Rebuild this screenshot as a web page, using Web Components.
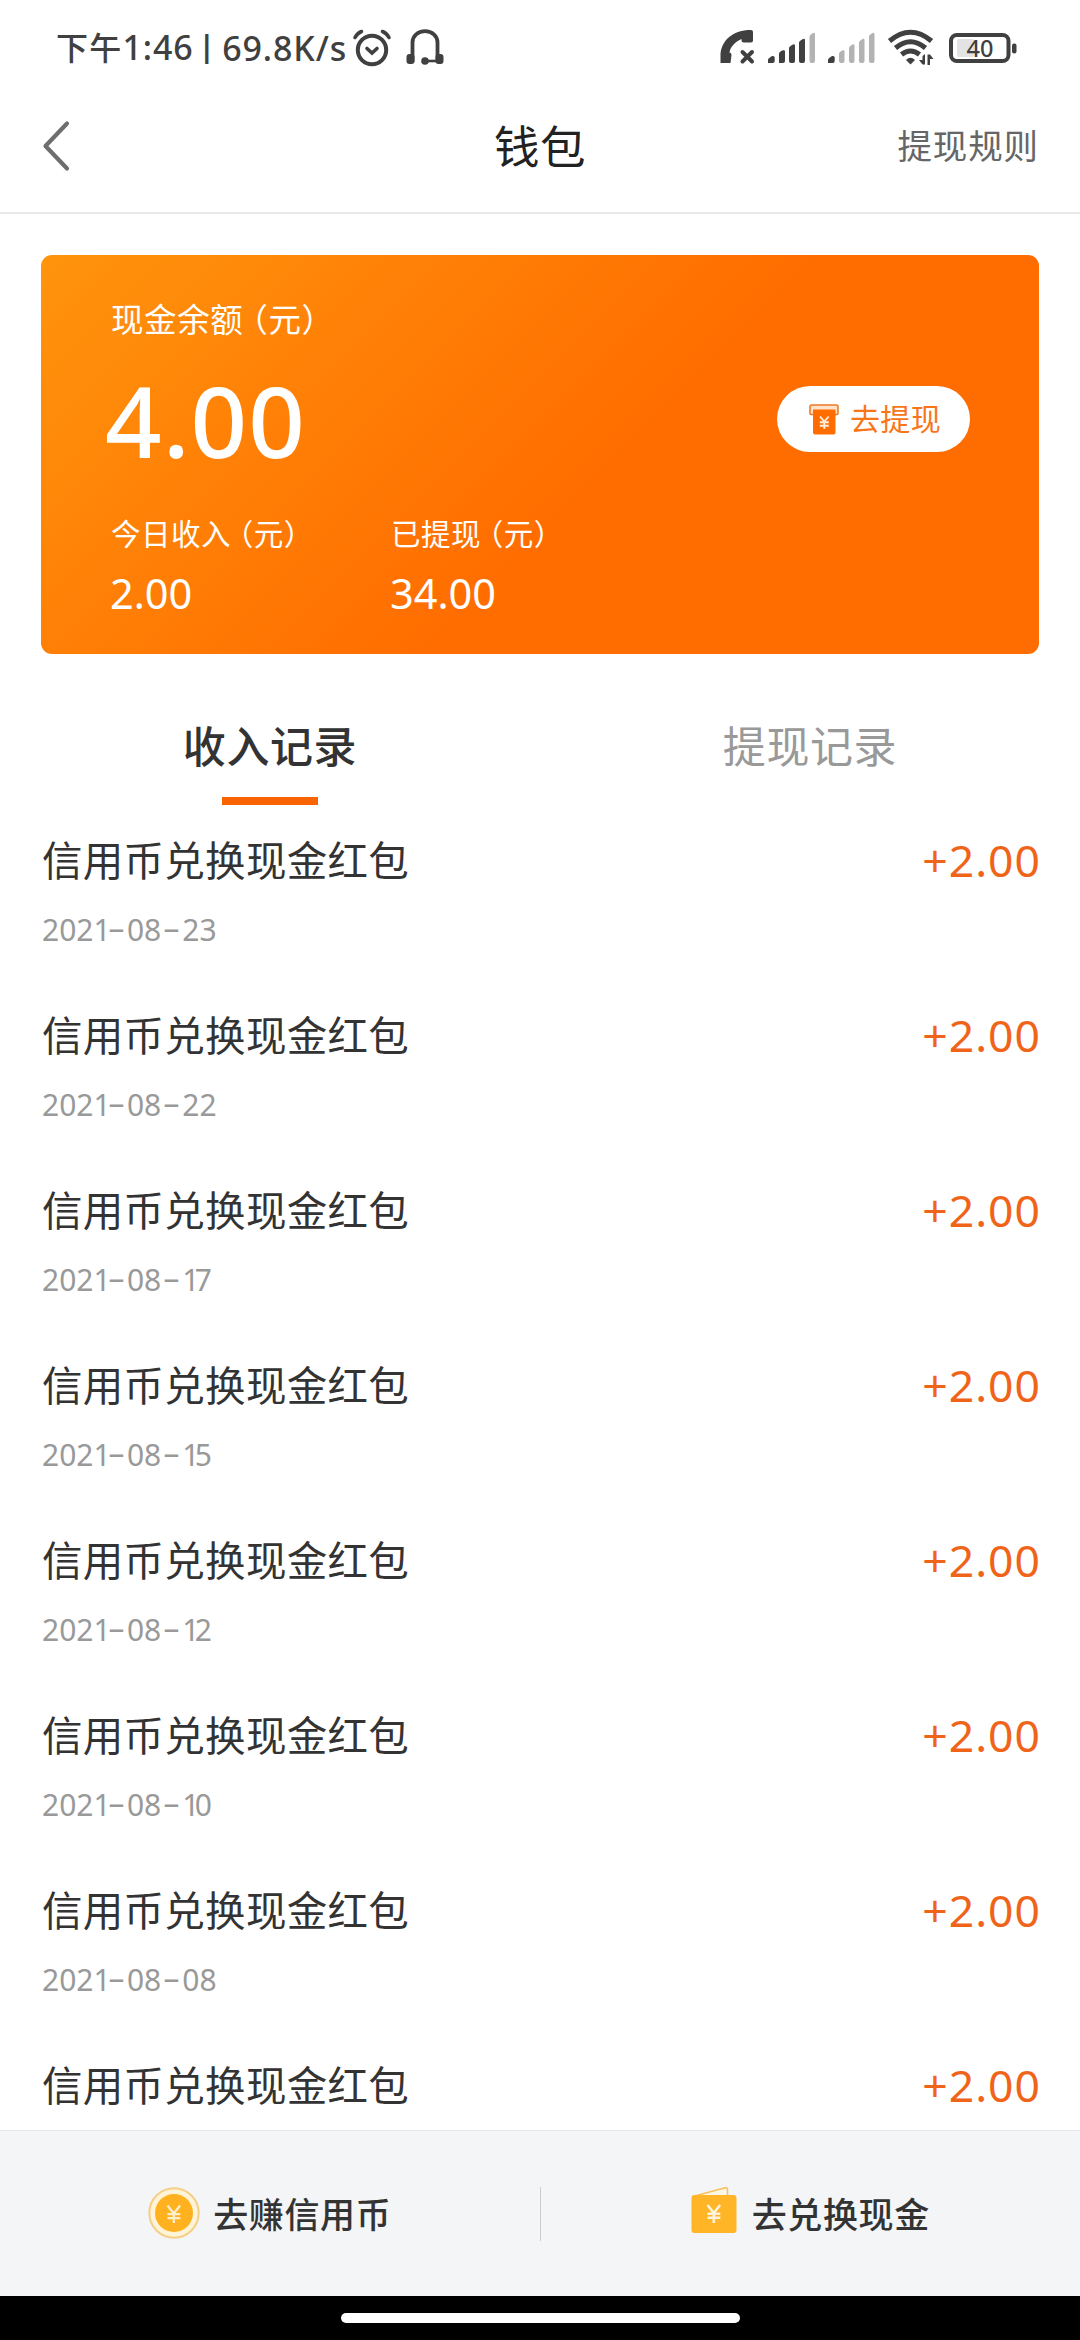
<!DOCTYPE html>
<html lang="zh-CN">
<head>
<meta charset="utf-8">
<title>钱包</title>
<style>
html,body{margin:0;padding:0;background:#fff}
body{font-family:"Noto Sans","Noto Sans CJK SC",sans-serif;color:#333}
</style>
</head>
<body>
<wallet-app></wallet-app>
<script>
const define = (name, html) => {
  const tpl = document.createElement('template');
  tpl.innerHTML = html;
  customElements.define(name, class extends HTMLElement {
    constructor() {
      super();
      this.attachShadow({ mode: 'open' }).append(tpl.content.cloneNode(true));
    }
  });
};

define('status-bar', `
<style>
:host{display:flex;justify-content:space-between;height:95px;box-sizing:border-box;padding:0 62px 0 56px;color:#404040}
.side{display:flex;align-items:center}
.clock{display:flex;align-items:center;font-size:34px;line-height:60px;font-weight:500;letter-spacing:.9px;white-space:pre}
.cjk{font-size:32px;letter-spacing:1.2px}
.bar{font-size:30px;line-height:54px;font-weight:700;margin:0 7px 4px 5px;letter-spacing:0}
svg{display:block;flex:none}
</style>
<div class="side"><div class="clock"><span><span class="cjk">下午</span>1:46</span><span class="bar">|</span><span>69.8K/s</span></div>
<svg width="40" height="38" viewBox="0 0 40 38" style="margin-left:5px" fill="none" stroke="#404040" stroke-linecap="round"><circle cx="20" cy="21" r="14.200" stroke-width="4"/><path d="M3 8.500Q5.500 4 9.500 2.500M37 8.500Q34.500 4 30.500 2.500" stroke-width="3.600"/><path d="M15 19.500l5 4.500 5-4.500" stroke-width="3.600"/></svg>
<svg width="38" height="38" viewBox="0 0 38 38" style="margin-left:14px" fill="none" stroke="#404040"><path d="M6.500 33V13.500C6.500 7 12 2.200 19 2.200S31.500 7 31.500 13.500V33" stroke-width="3.800"/><path d="M18 32H31" stroke-width="2.600"/><circle cx="19" cy="32" r="3.800" fill="#404040" stroke="none"/><rect x=".5" y="25" width="8" height="10" rx="3" fill="#404040" stroke="none"/><rect x="29.500" y="25" width="8" height="10" rx="3" fill="#404040" stroke="none"/></svg>
</div>
<div class="side">
<svg width="298" height="38" viewBox="0 0 298 38">
<g fill="#404040">
<path d="M.5 34V27C.5 11 14 .8 31 1a2 2 0 0 1 2 2v8.500a2 2 0 0 1-2 2h-7a2.500 2.500 0 0 1-2.500-2.500v-1C15 13 10.500 17.500 9.500 23.500a2.500 2.500 0 0 1 2 2.500l-1 8Z"/>
<path d="M22.500 23l9.500 9.500M32 23l-9.500 9.500" stroke="#404040" stroke-width="4" stroke-linecap="round"/>
<path d="M48 34v-3.500q0-1 4-3.500 2.700-.5 2.700 1.500v3.500a2 2 0 0 1-2 2ZM59 24.500q0-1.500 4-3.200 2-.6 2 1.200v9.500a2 2 0 0 1-2 2h-4ZM69 19q0-1.500 4-3.500 2-.6 2 1.200v15.300a2 2 0 0 1-2 2h-2a2 2 0 0 1-2-2ZM79 13.500q0-1.500 4-3.500 2-.6 2 1.200v20.800a2 2 0 0 1-2 2h-2a2 2 0 0 1-2-2Z"/>
<path d="M108 34v-3.500q0-1 4-3.500 2.700-.5 2.700 1.500v3.500a2 2 0 0 1-2 2Z"/></g>
<path fill="#b3b3b3" d="M89.500 7.500q0-1.500 3.500-3.500 2-.6 2 1.200v26.800a2 2 0 0 1-2 2h-1.500a2 2 0 0 1-2-2ZM119 24.500q0-1.500 3.500-3.200 2-.6 2 1.200v9.500a2 2 0 0 1-2 2H121a2 2 0 0 1-2-2ZM129 19q0-1.500 3.500-3.500 2-.6 2 1.200v15.300a2 2 0 0 1-2 2H131a2 2 0 0 1-2-2ZM139 13.500q0-1.500 3.500-3.500 2-.6 2 1.200v20.800a2 2 0 0 1-2 2H141a2 2 0 0 1-2-2ZM149 7.500q0-1.500 3.500-3.500 2-.6 2 1.200v26.800a2 2 0 0 1-2 2H151a2 2 0 0 1-2-2Z"/>
<g fill="none" stroke="#404040" stroke-width="5"><path d="M169.500 12Q190.500-5.500 211.500 12"/><path d="M175.500 19Q190.500 6.500 205.500 19"/><path d="M181.500 25.500Q190.500 18.500 199.500 25.500"/></g>
<path d="M186 31q4.500-4.500 9 0l-4.500 4.500Z" fill="#404040"/>
<path d="M205 25v10.500h-2.500L199 31h3.500V27ZM207.500 36V25.500h2.500L213.500 30H210v6Z" fill="#404040"/>
<rect x="237" y="10" width="17" height="18" rx="2" fill="#e3e3e3"/>
<rect x="231" y="6" width="57.500" height="26" rx="6" fill="none" stroke="#404040" stroke-width="4"/>
<rect x="292" y="14.500" width="4.500" height="10" rx="2" fill="#404040"/>
<text x="246.500" y="27.500" font-family="Noto Sans, sans-serif" font-size="23.500" font-weight="500" fill="#404040">40</text>
</svg></div>`);

define('nav-bar', `
<style>
:host{display:grid;grid-template-columns:1fr auto 1fr;align-items:center;height:119px;box-sizing:border-box;padding:0 41px 15px 41px;border-bottom:2px solid #e8e9e9}
.title{font-size:45.500px;line-height:60px;color:#222;letter-spacing:.5px}
.rule{justify-self:end;font-size:34.500px;line-height:60px;color:#666;letter-spacing:.9px}
svg{display:block}
</style>
<svg width="30" height="52" viewBox="0 0 30 52"><path d="M26 3.500L4.500 26 26 48.500" fill="none" stroke="#6e6e6e" stroke-width="4.200" stroke-linecap="round" stroke-linejoin="round"/></svg>
<span class="title"><slot name="title"></slot></span>
<span class="rule"><slot name="action"></slot></span>`);

// Caption followed by the currency unit in half-width forms of the CJK brackets.
define('unit-label', `
<style>
:host{display:block;white-space:nowrap}
.unit{margin-left:.25em;font-feature-settings:"halt"}
</style><slot></slot><span class="unit">（元）</span>`);

define('balance-card', `
<style>
:host{display:flex;justify-content:space-between;margin:41px 41px 0;height:399px;box-sizing:border-box;padding:42px 69px 0 70px;border-radius:11px;color:#fff;background:linear-gradient(135deg,#ff940d 0%,#ff6d00 56%)}
.cap{font-size:32.500px;line-height:46px;letter-spacing:.6px}
.sum{font-size:99px;font-weight:500;line-height:110px;letter-spacing:1px;margin:22px 0 0 -6px}
.stats{display:grid;grid-template-columns:280px auto;margin-top:36px}
.small{font-size:29.500px;line-height:46px;letter-spacing:.5px}
.num{font-size:41.500px;line-height:50px;margin:11px 0 0 -1px}
.btn{display:flex;align-items:center;justify-content:center;gap:11px;width:193px;height:66px;box-sizing:border-box;padding-left:3px;margin-top:89px;border-radius:33px;background:#fff;color:#f8761a;font-size:30px;line-height:60px;letter-spacing:.3px}
svg{display:block}
</style>
<div>
<unit-label class="cap">现金余额</unit-label>
<div class="sum">4.00</div>
<div class="stats">
<div><unit-label class="small">今日收入</unit-label><div class="num">2.00</div></div>
<div><unit-label class="small">已提现</unit-label><div class="num">34.00</div></div>
</div>
</div>
<div class="btn"><svg width="30" height="31" viewBox="0 0 30 31"><path d="M1 9.500V2.500A1.500 1.500 0 0 1 2.500 1h25A1.500 1.500 0 0 1 29 2.500v7a1 1 0 0 1-1 1H2a1 1 0 0 1-1-1Z" fill="#ffe3c8" stroke="#ee7a24" stroke-width="1.600"/><path d="M4 5.500H26.500V28.500a2 2 0 0 1-2 2H6a2 2 0 0 1-2-2Z" fill="#ff6d00"/><path d="M11 12.500l4.300 5 4.300-5M15.300 17.500V25M10.800 18.200h9M10.800 21.700h9" fill="none" stroke="#ffeedd" stroke-width="1.900"/></svg><span>去提现</span></div>`);

define('record-tabs', `
<style>
:host{display:grid;grid-template-columns:1fr 1fr;height:151px}
div{display:flex;flex-direction:column;align-items:center;justify-content:flex-end;font-size:43px;line-height:60px;letter-spacing:.6px;color:#999}
.on{color:#333;font-weight:500}
i{display:block;width:96px;height:8px;margin-top:20px}
.on i{background:#f96302}
</style>
<div class="on"><slot name="income"></slot><i></i></div>
<div><slot name="withdraw"></slot><i></i></div>`);

customElements.define('record-row', class extends HTMLElement {
  connectedCallback() {
    const date = (this.getAttribute('date') || '')
      .replace(/[-1]/g, c => c === '-' ? '<span class="dash">-</span>' : '<span class="one">1</span>');
    this.attachShadow({ mode: 'open' }).innerHTML = `
<style>
:host{display:flex;justify-content:space-between;align-items:flex-start;height:175px;flex:none;box-sizing:border-box;padding:26px 39px 0 42px}
.name{font-size:40.500px;line-height:60px;letter-spacing:.28px;color:#333}
.date{font-size:30px;line-height:40px;margin-top:18.500px;color:#999}
.dash{display:inline-block;width:21px;text-align:center;transform:translateY(-2px) scaleX(1.850)}
.one{letter-spacing:-4.700px}
.amount{font-size:44.500px;line-height:60px;margin-top:-1px;letter-spacing:1px;color:#f0641a}
</style>
<div><div class="name"><slot></slot></div><div class="date">${date}</div></div>
<span class="amount">${this.getAttribute('amount')}</span>`;
  }
});

define('record-list', `
<style>:host{display:flex;flex-direction:column;flex:1;min-height:0;overflow:hidden}</style><slot></slot>`);

define('action-bar', `
<style>
:host{display:grid;grid-template-columns:1fr 1px 1fr;align-items:center;height:166px;flex:none;box-sizing:border-box;background:#f4f5f7;border-top:1px solid #e6e9e9}
i{height:54px;background:#ccc}
.item{display:flex;align-items:center;justify-content:center;gap:13px;font-size:35px;font-weight:500;line-height:50px;letter-spacing:.6px;color:#333;margin-top:2px}
svg{display:block}
</style>
<div class="item"><svg width="52" height="52" viewBox="0 0 52 52" style="margin-top:-4px"><circle cx="26" cy="26" r="24.700" fill="#fff3d8" stroke="#f5cf86" stroke-width="2"/><circle cx="26" cy="26" r="19" fill="#ffb11f"/><path d="M19.500 18.500l6.300 8 6.300-8M25.800 26.500V36M19.500 27.200h12.800M19.500 31.200h12.800" fill="none" stroke="#fff0cc" stroke-width="2.300"/></svg><span>去赚信用币</span></div>
<i></i>
<div class="item" style="gap:15px"><svg width="46" height="48" viewBox="0 0 46 48" style="margin-top:-9px"><path d="M2 10.500L34 1.800q2.500-.6 2.500 1.500V10" fill="#fff6e5" stroke="#f8bf5a" stroke-width="1.500"/><rect x=".5" y="9" width="45" height="38" rx="3" fill="#ffb525"/><path d="M16.500 19l6.300 8 6.300-8M22.800 27V37M16.500 27.700h12.800M16.500 31.700h12.800" fill="none" stroke="#fff3dc" stroke-width="2.600"/></svg><span>去兑换现金</span></div>`);

define('home-indicator', `
<style>:host{display:flex;justify-content:center;height:44px;flex:none;box-sizing:border-box;padding-top:17px;background:#000}
i{width:399px;height:10px;border-radius:5px;background:#fff}</style><i></i>`);

const records = ['2021-08-23','2021-08-22','2021-08-17','2021-08-15','2021-08-12','2021-08-10','2021-08-08',''];
define('wallet-app', `
<style>:host{display:flex;flex-direction:column;width:1080px;height:2340px;overflow:hidden;background:#fff}
status-bar,nav-bar,balance-card,record-tabs{flex:none}</style>
<status-bar></status-bar>
<nav-bar><span slot="title">钱包</span><span slot="action">提现规则</span></nav-bar>
<balance-card></balance-card>
<record-tabs><span slot="income">收入记录</span><span slot="withdraw">提现记录</span></record-tabs>
<record-list>${records.map(d => `<record-row date="${d}" amount="+2.00">信用币兑换现金红包</record-row>`).join('')}</record-list>
<action-bar></action-bar>
<home-indicator></home-indicator>`);
</script>
</body>
</html>
